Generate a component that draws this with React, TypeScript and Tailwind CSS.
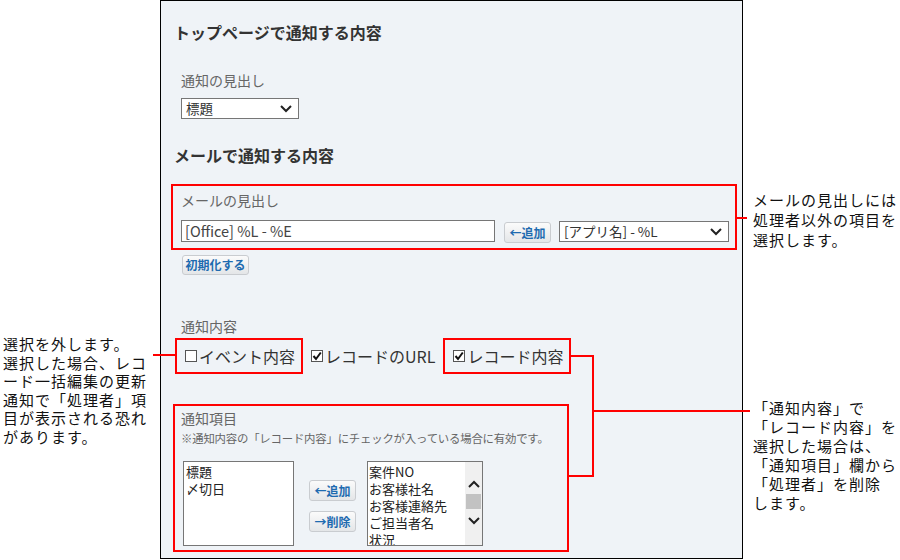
import React from 'react';

const jp = "font-['Noto_Sans_CJK_JP','Noto_Sans',sans-serif]";

function Chevron({ up = false, className = '' }: { up?: boolean; className?: string }) {
  return (
    <svg width="12" height="8" viewBox="0 0 12 8" className={className}>
      <path d={up ? 'M1 7 L6 2 L11 7' : 'M1 1 L6 6 L11 1'} fill="none" stroke="#222" strokeWidth="2" />
    </svg>
  );
}

function Select({ value, className }: { value: string; className: string }) {
  return (
    <div className={`flex items-center justify-between border border-[#767676] bg-white pl-[4px] pr-[6px] text-[13.5px] text-[#333] ${className}`}>
      <span className="leading-none">{value}</span>
      <Chevron />
    </div>
  );
}

function Btn({ label, className = '' }: { label: string; className?: string }) {
  return (
    <div
      className={`flex items-center justify-center rounded-[3px] border border-[#c9ccd0] bg-gradient-to-b from-[#fbfbfb] to-[#e4e6e8] text-[12px] font-bold text-[#1e6bb0] ${className}`}
    >
      {label}
    </div>
  );
}

function Box({ checked }: { checked: boolean }) {
  return (
    <span className="relative inline-block h-[12px] w-[12px] shrink-0 border border-[#555] bg-white">
      {checked && (
        <svg width="10" height="10" viewBox="0 0 10 10" className="absolute left-0 top-0">
          <path d="M1.5 5 L4 8 L8.8 1.5" fill="none" stroke="#111" strokeWidth="2" />
        </svg>
      )}
    </span>
  );
}

export default function App() {
  return (
    <div className={`relative flex h-[560px] w-[900px] bg-white ${jp}`}>
      {/* left note */}
      <div className="w-[160px] pl-[3px] pt-[335px] text-[15px] leading-[18.5px] tracking-[1px] text-[#111]">
        選択を外します。
        <br />
        選択した場合、レコ
        <br />
        ード一括編集の更新
        <br />
        通知で「処理者」項
        <br />
        目が表示される恐れ
        <br />
        があります。
      </div>

      {/* panel */}
      <div className="h-[559px] w-[583px] border border-black bg-[#eff3f7]">
        <div className="ml-[13px] mt-[21px] text-[16px] font-bold leading-[20px] text-[#333]">トップページで通知する内容</div>
        <div className="ml-[20px] mt-[28px] text-[14px] leading-[20px] text-[#666]">通知の見出し</div>
        <Select value="標題" className="ml-[20px] mt-[8px] h-[21px] w-[118px]" />
        <div className="ml-[13px] mt-[26px] text-[16px] font-bold leading-[20px] text-[#333]">メールで通知する内容</div>

        {/* mail subject box */}
        <div className="ml-[10px] mt-[19px] h-[66px] w-[566px] border-2 border-[#f00] pl-[8px] pt-[4px]">
          <div className="text-[14px] leading-[20px] text-[#666]">メールの見出し</div>
          <div className="mt-[10px] flex items-start">
            <div className="flex h-[22px] w-[314px] items-center border border-[#767676] bg-white pl-[3px] text-[14.5px] text-[#444]">
              [Office] %L - %E
            </div>
            <Btn label="←追加" className="ml-[9px] mt-[2px] h-[21px] w-[47px]" />
            <Select value="[アプリ名] - %L" className="ml-[8px] mt-[1px] h-[21px] w-[170px]" />
          </div>
        </div>

        <Btn label="初期化する" className="ml-[21px] mt-[5px] h-[20px] w-[67px]" />

        <div className="ml-[20px] mt-[41px] text-[14px] leading-[20px] text-[#666]">通知内容</div>

        <div className="ml-[14px] mt-[2px] flex items-center text-[16px] text-[#333]">
          <div className="flex h-[36px] w-[128px] items-center border-2 border-[#f00] pl-[8px]">
            <Box checked={false} />
            <span className="ml-[2px]">イベント内容</span>
          </div>
          <div className="ml-[8px] flex items-center">
            <Box checked />
            <span className="ml-[2px]">レコードのURL</span>
          </div>
          <div className="ml-[8px] flex h-[36px] w-[128px] items-center border-2 border-[#f00] pl-[8px]">
            <Box checked />
            <span className="ml-[2px]">レコード内容</span>
          </div>
        </div>

        {/* notification items box */}
        <div className="ml-[12px] mt-[30px] h-[148px] w-[396px] border-2 border-[#f00] pl-[6px] pt-[2px]">
          <div className="text-[14px] leading-[20px] text-[#666]">通知項目</div>
          <div className="mt-[1px] whitespace-nowrap text-[11.4px] leading-[18px] tracking-[-0.2px] text-[#666]">
            ※通知内容の「レコード内容」にチェックが入っている場合に有効です。
          </div>
          <div className="mt-[14px] flex items-start">
            <div className="ml-[2px] h-[85px] w-[111px] border border-[#767676] bg-white pl-[2px] pt-[1px] text-[13px] leading-[17px] text-[#222]">
              <div>標題</div>
              <div>〆切日</div>
            </div>
            <div className="ml-[15px] mt-[19px] flex flex-col">
              <Btn label="←追加" className="h-[21px] w-[47px]" />
              <Btn label="→削除" className="mt-[10px] h-[21px] w-[47px]" />
            </div>
            <div className="ml-[11px] flex h-[85px] w-[116px] overflow-hidden border border-[#767676] bg-white">
              <div className="flex-1 pl-[1px] pt-[1px] text-[13px] leading-[17px] text-[#222]">
                <div>案件NO</div>
                <div>お客様社名</div>
                <div>お客様連絡先</div>
                <div>ご担当者名</div>
                <div>状況</div>
              </div>
              <div className="flex w-[17px] flex-col items-center bg-[#f0f0f0] pt-[18px]">
                <Chevron up />
                <div className="mt-[6px] h-[15px] w-[15px] bg-[#c2c2c2]" />
                <Chevron className="mt-[8px]" />
              </div>
            </div>
          </div>
        </div>
      </div>

      {/* right notes */}
      <div className="flex-1 pl-[10px] text-[15px] tracking-[1px] text-[#111]">
        <div className="mt-[190px] leading-[20px]">
          メールの見出しには
          <br />
          処理者以外の項目を
          <br />
          選択します。
        </div>
        <div className="mt-[148px] leading-[19px]">
          「通知内容」で
          <br />
          「レコード内容」を
          <br />
          選択した場合は、
          <br />
          「通知項目」欄から
          <br />
          「処理者」を削除
          <br />
          します。
        </div>
      </div>

      {/* connector lines */}
      <div className="absolute left-[737px] top-[217px] h-[2px] w-[10px] bg-[#f00]" />
      <div className="absolute left-[153px] top-[354px] h-[2px] w-[22px] bg-[#f00]" />
      <div className="absolute left-[571px] top-[355px] h-[2px] w-[23px] bg-[#f00]" />
      <div className="absolute left-[592px] top-[355px] h-[122px] w-[2px] bg-[#f00]" />
      <div className="absolute left-[569px] top-[475px] h-[2px] w-[25px] bg-[#f00]" />
      <div className="absolute left-[592px] top-[410px] h-[2px] w-[158px] bg-[#f00]" />
    </div>
  );
}
